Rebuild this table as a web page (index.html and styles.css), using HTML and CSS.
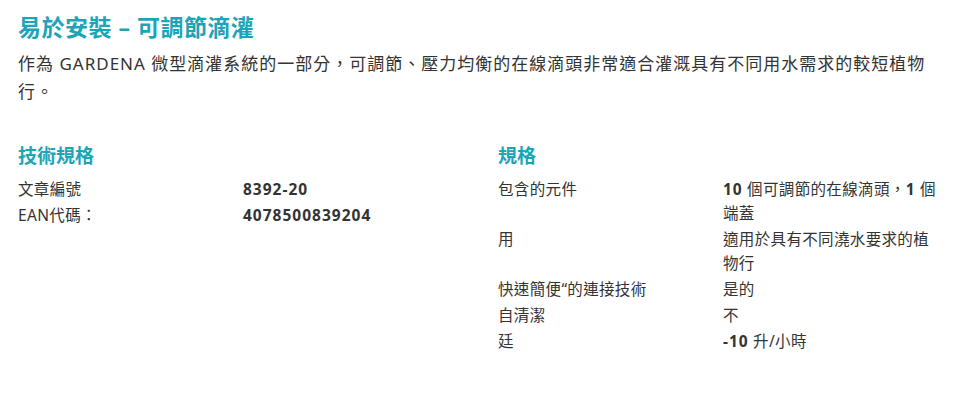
FILE: index.html
```html
<!DOCTYPE html>
<html lang="zh-Hant">
<head>
    <meta charset="UTF-8">
    <meta name="viewport" content="width=device-width, initial-scale=1.0">
    <title>易於安裝 – 可調節滴灌</title>
    <link rel="stylesheet" href="styles.css">
</head>
<body>
    <div class="container">
        <h1>易於安裝 – 可調節滴灌</h1>
        <p class="intro">作為 GARDENA 微型滴灌系統的一部分，可調節、壓力均衡的在線滴頭非常適合灌溉具有不同用水需求的較短植物行。</p>

        <div class="specs">
            <div class="spec-block">
                <h2>技術規格</h2>
                <div class="spec-row">
                    <div class="label">文章編號</div>
                    <div class="value"><b>8392-20</b></div>
                </div>
                <div class="spec-row">
                    <div class="label">EAN代碼：</div>
                    <div class="value"><b>4078500839204</b></div>
                </div>
            </div>

            <div class="spec-block">
                <h2>規格</h2>
                <div class="spec-row">
                    <div class="label">包含的元件</div>
                    <div class="value"><b>10</b> 個可調節的在線滴頭，<b>1</b> 個端蓋</div>
                </div>
                <div class="spec-row">
                    <div class="label">用</div>
                    <div class="value">適用於具有不同澆水要求的植物行</div>
                </div>
                <div class="spec-row">
                    <div class="label">快速簡便“的連接技術</div>
                    <div class="value">是的</div>
                </div>
                <div class="spec-row">
                    <div class="label">自清潔</div>
                    <div class="value">不</div>
                </div>
                <div class="spec-row">
                    <div class="label">廷</div>
                    <div class="value"><b>-10</b> 升/小時</div>
                </div>
            </div>
        </div>
    </div>
</body>
</html>
```

FILE: styles.css
```css
body { margin: 0; background: #fff; color: #333; font-family: "Noto Sans", "Noto Sans CJK TC", sans-serif; }
.container { padding: 12px 18px 0 18px; width: 932px; }
h1 { margin: 0; font-size: 23px; line-height: 30px; font-weight: bold; color: #1ba5b8; letter-spacing: 0.5px; }
.intro { margin: 8px 0 0 0; width: 922px; font-size: 17px; line-height: 28px; letter-spacing: 1px; }
.specs { display: grid; grid-template-columns: 452px 452px; column-gap: 28px; margin-top: 36px; }
h2 { margin: 0 0 7px 0; font-size: 19px; line-height: 28px; font-weight: bold; color: #1ba5b8; }
.spec-row { display: grid; grid-template-columns: 225px 220px; font-size: 15.5px; line-height: 24px; padding-bottom: 2px; letter-spacing: 0.35px; }
.value b { font-weight: bold; letter-spacing: 1px; }
```
